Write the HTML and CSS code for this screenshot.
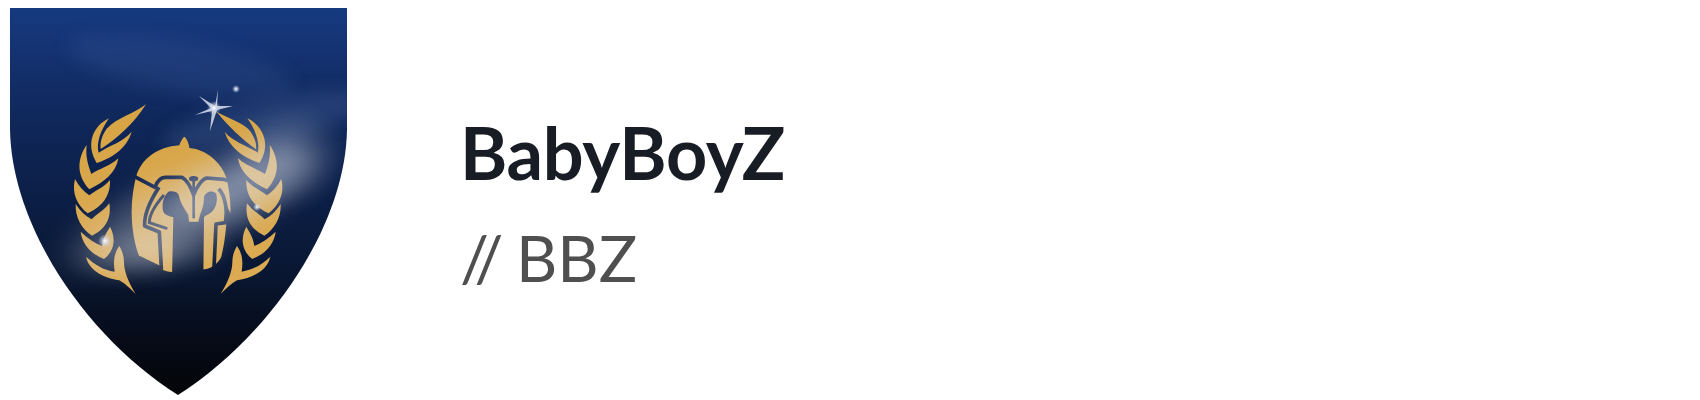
FILE: index.html
```html
<!DOCTYPE html>
<html lang="en">
<head>
  <meta charset="UTF-8" />
  <title>BabyBoyZ</title>
  <link rel="stylesheet" href="styles.css">
</head>
<body>

<header class="team-header">
  <svg class="team-logo" viewBox="10 8 337 387" xmlns="http://www.w3.org/2000/svg" role="img" aria-label="BabyBoyZ crest">
    <defs>
      <linearGradient id="shieldFill" gradientUnits="userSpaceOnUse" x1="0" y1="8" x2="0" y2="395">
        <stop offset="0" stop-color="#163a80"/>
        <stop offset="0.12" stop-color="#143270"/>
        <stop offset="0.3" stop-color="#0f2759"/>
        <stop offset="0.5" stop-color="#0b1e45"/>
        <stop offset="0.7" stop-color="#091630"/>
        <stop offset="0.84" stop-color="#060c1a"/>
        <stop offset="1" stop-color="#050508"/>
      </linearGradient>
      <linearGradient id="goldFill" gradientUnits="userSpaceOnUse" x1="0" y1="70" x2="0" y2="640">
        <stop offset="0" stop-color="#d7a444"/>
        <stop offset="1" stop-color="#dcab55"/>
      </linearGradient>
      <radialGradient id="glow">
        <stop offset="0" stop-color="#dfe3ee" stop-opacity="0.5"/>
        <stop offset="0.5" stop-color="#dfe3ee" stop-opacity="0.26"/>
        <stop offset="1" stop-color="#dfe3ee" stop-opacity="0"/>
      </radialGradient>
      <radialGradient id="sparkle">
        <stop offset="0" stop-color="#fff"/>
        <stop offset="0.3" stop-color="#dfe4f2" stop-opacity="0.8"/>
        <stop offset="1" stop-color="#c0c8e0" stop-opacity="0"/>
      </radialGradient>
      <filter id="soft" x="-30%" y="-60%" width="160%" height="220%">
        <feGaussianBlur stdDeviation="9"/>
      </filter>
      <clipPath id="shieldClip">
        <path d="M10 8H347V130C345 230 265 340 178 395C90 340 12 230 10 130Z"/>
      </clipPath>
      <mask id="helmetCuts" maskUnits="userSpaceOnUse" x="200" y="150" width="330" height="440">
        <rect x="200" y="150" width="330" height="440" fill="#fff"/>
        <g fill="none" stroke="#000" stroke-width="11" stroke-linejoin="round">
          <path d="M224 290L285 322C292 302 302 292 316 292H366C378 298 392 320 401 345C410 320 426 298 440 294L490 298L505 302"/>
          <path d="M297 322C272 360 252 400 254 438L298 456L304 565L236 532"/>
          <path d="M476 326C498 350 502 395 496 428L468 432L462 566"/>
        </g>
        <path d="M312 345C290 370 268 400 268 428L322 446" fill="none" stroke="#000" stroke-width="9"/>
        <path d="M401 305V412" fill="none" stroke="#000" stroke-width="8" stroke-linecap="round"/>
        <ellipse cx="401" cy="296" rx="14" ry="8" fill="#000"/>
        <path d="M325 335C345 330 358 340 358 352C362 372 378 392 385 405L387 425H415L420 405C428 385 432 372 432 352C436 338 452 328 468 340C474 358 470 385 452 398C444 404 436 406 432 412L430 590H336L340 412C325 408 308 405 308 385C306 365 312 348 325 335Z" fill="#000"/>
      </mask>
    </defs>

    <g clip-path="url(#shieldClip)">
      <rect x="0" y="0" width="360" height="400" fill="url(#shieldFill)"/>
      <ellipse cx="180" cy="66" rx="115" ry="26" fill="#4a68a8" opacity="0.2" filter="url(#soft)" transform="rotate(10 180 66)"/>
      <ellipse cx="265" cy="122" rx="105" ry="22" fill="#5a74ac" opacity="0.28" filter="url(#soft)" transform="rotate(-12 265 122)"/>
    </g>

    <!-- crest, traced at 3x so the numbers read off a zoomed crop -->
    <g transform="translate(60 80) scale(0.33333)" fill="url(#goldFill)">
      <path d="M258 73C222 102 172 112 140 146C126 166 120 186 122 207C170 178 222 130 258 73Z"/>
      <path d="M470 95C505 115 552 128 572 155C585 175 590 190 588 208C548 178 505 140 470 95Z"/>
      <g id="wreath">
        <path d="M147 115C110 132 90 168 94 205C96 222 103 238 110 249C150 236 200 208 215 155C190 186 148 196 116 218C108 190 122 150 147 115Z"/>
        <path d="M80 195C54 232 46 282 88 328C135 305 168 278 175 235C150 258 118 266 94 282C84 255 76 228 80 195Z"/>
        <path d="M45 297C34 340 52 376 83 400C125 380 152 350 150 300C132 322 108 330 88 346C72 335 56 318 45 297Z"/>
        <path d="M47 372C45 412 66 448 96 467C132 450 156 420 148 370C132 392 112 400 95 418C76 408 60 392 47 372Z"/>
        <path d="M62 455C66 492 94 522 132 537C158 518 172 482 150 440C140 458 130 470 126 498C104 490 82 474 62 455Z"/>
        <path d="M78 530C86 568 125 592 178 601C198 612 212 628 227 642C205 605 192 575 192 545C192 528 186 512 178 498C166 515 158 535 164 575C130 570 104 554 78 530Z"/>
      </g>
      <use href="#wreath" transform="translate(709 0) scale(-1 1)"/>

      <path mask="url(#helmetCuts)" d="M358 196C362 185 368 172 374 170C382 178 388 195 388 204C440 208 486 250 500 296C508 330 513 370 511 400L500 375C502 430 494 490 484 530C474 550 458 564 434 568L336 576C325 576 310 572 300 565L240 534C224 500 214 440 215 390C216 350 222 315 228 292C242 238 292 200 358 196Z"/>
    </g>

    <!-- sheen lying over the gold -->
    <g clip-path="url(#shieldClip)">
      <ellipse cx="190" cy="210" rx="155" ry="50" fill="url(#glow)" filter="url(#soft)" transform="rotate(-22 190 210)"/>
      <ellipse cx="232" cy="188" rx="95" ry="42" fill="url(#glow)" filter="url(#soft)" opacity="0.7" transform="rotate(-25 232 188)"/>
      <ellipse cx="285" cy="160" rx="62" ry="50" fill="url(#glow)" filter="url(#soft)" opacity="0.8" transform="rotate(-20 285 160)"/>
      <ellipse cx="150" cy="252" rx="85" ry="28" fill="url(#glow)" filter="url(#soft)" opacity="0.8" transform="rotate(-4 150 252)"/>
    </g>

    <!-- stars -->
    <g fill="#d8deee">
      <path d="M215 106L218 90L217 106L233 106L217 110L210 131L212 111L195 115L211 108L199 96Z" opacity="0.85"/>
      <circle cx="214" cy="108" r="7" fill="url(#sparkle)"/>
      <circle cx="236" cy="89" r="4" fill="url(#sparkle)"/>
      <circle cx="257" cy="207" r="4" fill="url(#sparkle)"/>
      <circle cx="105" cy="241" r="7" fill="url(#sparkle)"/>
    </g>
  </svg>

  <div class="team-info">
    <h1 class="team-name">BabyBoyZ</h1>
    <div class="team-tag">// BBZ</div>
  </div>
</header>

</body>
</html>
```

FILE: styles.css
```css
body {
  margin: 0;
  padding: 0;
  background-color: #fff;
  font-family: Lato, "Liberation Sans", sans-serif;
}

.team-header {
  display: flex;
  align-items: center;
  height: 400px;
  padding-left: 10px;
  gap: 113px;
}

.team-logo {
  display: block;
  width: 337px;
  height: 387px;
  margin-top: 3px;
}

.team-info {
  display: flex;
  flex-direction: column;
  gap: 24px;
  padding-top: 6px;
}

.team-name {
  margin: 0;
  font-size: 72px;
  font-weight: 700;
  line-height: 1.2;
  letter-spacing: -0.3px;
  color: #181c24;
}

.team-tag {
  font-size: 64px;
  line-height: 1.2;
  word-spacing: -4px;
  color: #4f4f4f;
}
```
